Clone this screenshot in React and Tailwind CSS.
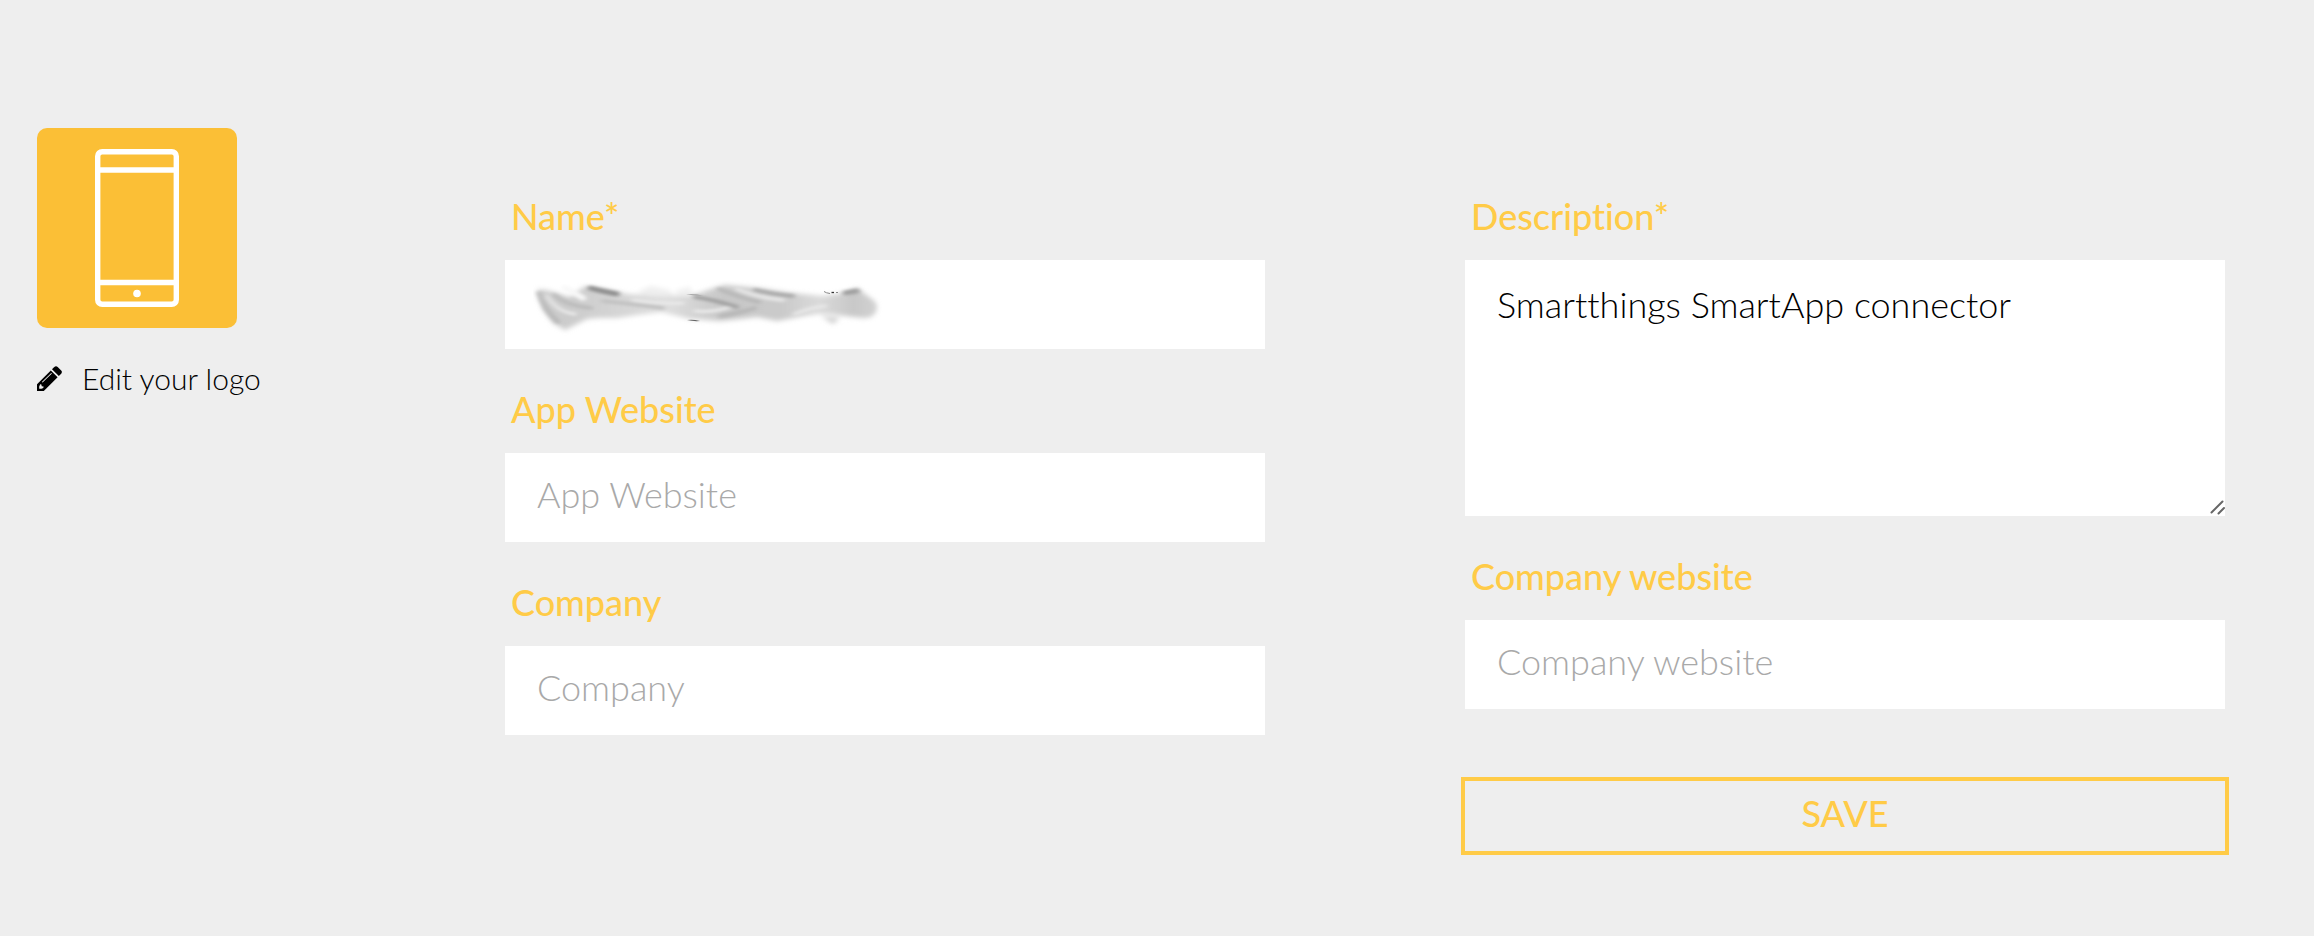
import React from "react";

function PhoneLogo() {
  return (
    <svg viewBox="0 0 200 200" className="size-[200px] rounded-[10px] bg-[#fbbf36]" aria-hidden="true">
      <g fill="none" stroke="#fff" strokeWidth="5.4">
        <rect x="60.7" y="23.7" width="78.6" height="152.6" rx="4.5" />
        <path d="M61 42h78M61 154.500h78" />
      </g>
      <circle cx="100" cy="165.500" r="3.800" fill="#fff" />
    </svg>
  );
}

function PencilIcon() {
  return (
    <svg viewBox="0 0 25 25" className="size-[25px]" aria-hidden="true">
      <path
        fillRule="evenodd"
        d="M0 25V18.200L13.800 4.400L20.600 11.200L6.800 25ZM2.200 20.500V22.800H4.500L6.300 22L6.600 20.400L4.700 20.200L4.400 18.400L3.200 18.200ZM5.600 16.500L14.900 7.600L14.200 7L4.900 16.100Z"
      />
      <path d="M15 3.200L17.300 0.900Q19 -0.600 20.700 0.900L24.200 4.400Q25.600 6 24.200 7.700L21.800 10Z" />
    </svg>
  );
}

function ResizeGrip() {
  return (
    <svg
      viewBox="0 0 16 16"
      className="pointer-events-none absolute right-0 bottom-0 size-4"
      fill="none"
      stroke="#666"
      strokeWidth="2"
      strokeLinecap="round"
      aria-hidden="true"
    >
      <path d="M2.500 12.500L13.500 1.500M9.500 13.500L15 8" />
    </svg>
  );
}

function Smudge() {
  return (
    <svg
      viewBox="0 0 360 56"
      className="pointer-events-none absolute top-5 left-7 h-14 w-[360px]"
      aria-hidden="true"
    >
      <defs>
        <filter id="soft" x="-10%" y="-30%" width="120%" height="160%">
          <feGaussianBlur stdDeviation="2.4" />
        </filter>
        <filter id="streak" x="-20%" y="-50%" width="140%" height="200%">
          <feGaussianBlur stdDeviation="2.6 1.8" />
        </filter>
        <linearGradient id="body" x1="0" x2="1" y1="0" y2="0">
          <stop offset="0" stopColor="#cccccc" />
          <stop offset="0.1" stopColor="#cccccc" />
          <stop offset="0.26" stopColor="#d6d6d6" />
          <stop offset="0.38" stopColor="#dedede" />
          <stop offset="0.55" stopColor="#c8c8c8" />
          <stop offset="0.72" stopColor="#cacaca" />
          <stop offset="0.83" stopColor="#dadada" />
          <stop offset="0.93" stopColor="#c8c8c8" />
          <stop offset="1" stopColor="#d2d2d2" />
        </linearGradient>
      </defs>
      <g filter="url(#soft)">
        <path
          fill="url(#body)"
          d="M4 10Q10 9 20 12L36 17L47 10L50 7L72 9L95 14L125 16L157 16L178 9L192 5L224 8L258 13L290 16L312 13L324 8L336 17Q345 22 344 28Q343 38 330 38L312 36L296 34L284 34L266 37L244 41L224 37L207 39L187 41L157 39L128 32L104 35L84 38L66 38L54 39L44 44L32 50L20 43L10 30Z"
        />
        <path fill="#efefef" d="M104 12L118 6L136 10L142 16L112 15ZM142 11L157 7L160 15L144 15Z" />
        <path fill="#d0d0d0" d="M288 36L307 38L300 44Z" />
      </g>
      <g fill="none" filter="url(#streak)" strokeLinecap="round">
        <path stroke="#b4b4b4" strokeWidth="4" d="M6 13Q10 28 25 42" />
        <path stroke="#ebebeb" strokeWidth="3" d="M14 16Q24 32 42 34" />
        <path stroke="#bcbcbc" strokeWidth="4" d="M21 15Q34 26 58 28" />
        <path stroke="#f8f8f8" strokeWidth="6" d="M32 8L50 18" />
        <path stroke="#8f8f8f" strokeWidth="5" d="M57 8Q68 11 84 14" />
        <path stroke="#c2c2c2" strokeWidth="4" d="M70 21Q100 24 130 28" />
        <path stroke="#eaeaea" strokeWidth="3" d="M100 20Q128 24 150 23M200 26Q180 33 162 31" />
        <path stroke="#a2a2a2" strokeWidth="4" d="M162 17Q178 19 204 27" />
        <path stroke="#b8b8b8" strokeWidth="4" d="M186 9Q208 18 226 22M187 36Q207 33 222 28" />
        <path stroke="#ababab" strokeWidth="4" d="M222 10Q242 15 260 16" />
        <path stroke="#e6e6e6" strokeWidth="4" d="M204 9Q226 18 250 20M262 34Q276 28 292 26" />
        <path stroke="#9f9f9f" strokeWidth="5" d="M312 13L324 11" />
      </g>
      <path fill="#666" d="M154 40Q160 39 167 41Q160 41.500 154 40Z" />
      <path fill="#999" d="M153 14.500Q160 13.500 170 15.500Q160 15.500 153 14.500Z" />
      <path fill="none" stroke="#888" d="M291 11.500Q293 13 297 13.500M303 12.500H305" />
      <path fill="none" stroke="#333" strokeWidth="1.300" d="M298.500 12.500H301" />
    </svg>
  );
}

const boxClass =
  "block w-full rounded-none bg-white px-8 text-4xl font-light text-black outline-none placeholder:text-[#a9a9a9] placeholder:opacity-100";

function Field({ id, label, children }) {
  return (
    <div>
      <label htmlFor={id} className="mb-5 block pl-1.5 text-4xl leading-12 font-medium text-[#ffcb47]">
        {label}
      </label>
      <div className="relative">{children}</div>
    </div>
  );
}

function TextField({ id, label, placeholder, children }) {
  return (
    <Field id={id} label={label}>
      <input id={id} type="text" placeholder={placeholder} className={`${boxClass} h-[89px] pb-2`} />
      {children}
    </Field>
  );
}

export default function App() {
  return (
    <main className="flex min-h-screen bg-[#eeeeee] pt-32 pr-[89px] pb-20 pl-[37px] font-['Lato',sans-serif] text-black [font-variant-ligatures:none]">
      <aside className="w-[468px] shrink-0">
        <PhoneLogo />
        <button type="button" className="mt-[30px] flex items-center gap-5 text-3xl leading-10 font-light">
          <PencilIcon />
          Edit your logo
        </button>
      </aside>

      <form className="grid flex-1 grid-cols-2 items-start gap-[200px] pt-16">
        <div className="flex flex-col gap-9">
          <TextField id="name" label="Name*">
            <Smudge />
          </TextField>
          <TextField id="app-website" label="App Website" placeholder="App Website" />
          <TextField id="company" label="Company" placeholder="Company" />
        </div>

        <div className="flex flex-col gap-9">
          <Field id="description" label="Description*">
            <textarea
              id="description"
              defaultValue="Smartthings SmartApp connector"
              className={`${boxClass} h-64 resize-y pt-5 leading-12 [&::-webkit-resizer]:bg-white`}
            />
            <ResizeGrip />
          </Field>
          <TextField id="company-website" label="Company website" placeholder="Company website" />
          <button
            type="button"
            className="-mx-1 mt-8 h-[78px] border-4 border-[#ffcb47] pb-1.5 text-4xl font-medium text-[#ffcb47]"
          >
            SAVE
          </button>
        </div>
      </form>
    </main>
  );
}
